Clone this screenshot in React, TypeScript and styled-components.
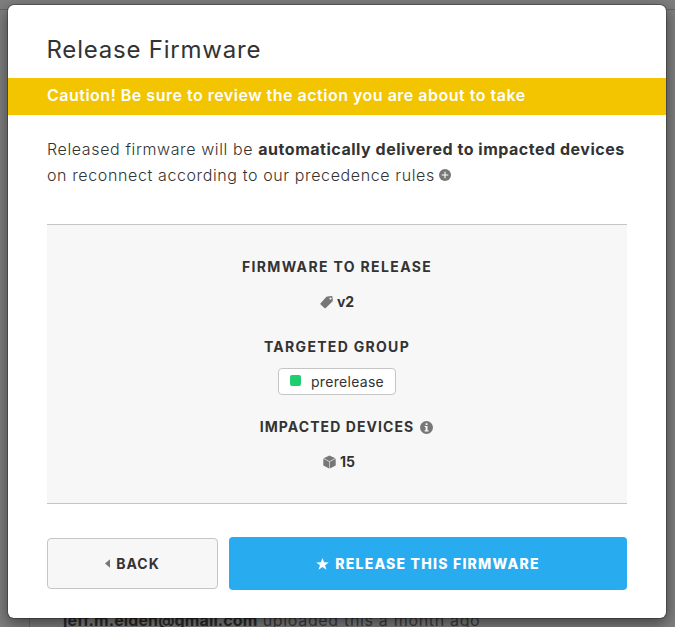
import React from 'react';
import styled, { createGlobalStyle } from 'styled-components';

const GlobalStyle = createGlobalStyle`
  *, *::before, *::after { box-sizing: border-box; }
  html, body { margin: 0; height: 100%; overflow: hidden; background: #7e7e7e; }
  body { font-family: Inter, 'Liberation Sans', sans-serif; color: #333; -webkit-font-smoothing: antialiased; }
  h1, h2, p { margin: 0; }
`;

const Screen = styled.div`
  position: relative;
  width: 675px;
  height: 627px;
  overflow: hidden;
  display: flex;
  padding: 5px 9px 9px 8px;
`;

/* The dimmed page that sits behind the dialog */
const Backdrop = styled.div`
  position: absolute;
  inset: 0;
  display: flex;
  flex-direction: column;
  background: #7e7e7e;
`;

const BackdropBar = styled.div`
  height: 10px;
  flex: none;
  border-bottom: 1px solid #656565;
`;

const BackdropFeed = styled.div`
  flex: 1;
  display: flex;
  align-items: flex-end;
  margin-left: 29px;
  padding-left: 33px;
  border-left: 1px solid #666;
`;

const FeedLine = styled.p`
  height: 19px;
  font-size: 16px;
  line-height: 24px;
  letter-spacing: 0.67px;
  white-space: nowrap;
  color: #3b3b3b;
  b { font-weight: 700; color: #2a2a2a; letter-spacing: 0.12px; }
`;

const Dialog = styled.section`
  position: relative;
  flex: 1;
  display: flex;
  flex-direction: column;
  border-radius: 6px;
  background: #fff;
  box-shadow: 0 0 0 1px rgba(0, 0, 0, 0.26), 0 5px 15px rgba(0, 0, 0, 0.5);
`;

const Title = styled.h1`
  height: 73px;
  padding: 29px 38.5px 0;
  font-size: 24px;
  line-height: 32px;
  font-weight: 400;
  letter-spacing: 0.78px;
`;

const Caution = styled.div`
  height: 37px;
  padding: 0 39px;
  background: #f3c500;
  color: #fff;
  font-size: 16px;
  line-height: 35px;
  font-weight: 600;
  letter-spacing: 0.5px;
  white-space: nowrap;
`;

const Body = styled.div`
  padding: 21px 39px 0;
  display: flex;
  flex-direction: column;
`;

const Line = styled.p`
  display: flex;
  align-items: center;
  height: 26px;
  font-size: 16px;
  line-height: 26px;
  font-weight: 300;
  letter-spacing: 0.62px;
  white-space: pre;
  b { font-weight: 700; letter-spacing: 0.52px; }
  svg { margin-left: 4px; }
`;

const Summary = styled.div`
  height: 280px;
  margin-top: 36px;
  padding-top: 32px;
  display: flex;
  flex-direction: column;
  align-items: center;
  border-top: 1px solid #c5c5c5;
  border-bottom: 1px solid #c5c5c5;
  background: #f7f7f7;
`;

const Item = styled.div`
  height: 80px;
  display: flex;
  flex-direction: column;
  align-items: center;
`;

const Label = styled.h2<{ $spacing: number; $indent?: number }>`
  display: flex;
  align-items: center;
  gap: 6px;
  height: 20px;
  padding-left: ${(p) => p.$indent ?? 0}px;
  font-size: 14px;
  line-height: 20px;
  font-weight: 700;
  letter-spacing: ${(p) => p.$spacing}px;
  white-space: nowrap;
`;

const Value = styled.div<{ $indent?: number }>`
  display: flex;
  align-items: center;
  gap: 4px;
  height: 20px;
  margin-top: 15px;
  padding-left: ${(p) => p.$indent ?? 0}px;
  font-size: 14px;
  line-height: 20px;
  font-weight: 700;
`;

const GroupTag = styled.div`
  display: flex;
  align-items: center;
  width: 118px;
  height: 27px;
  margin-top: 11px;
  padding: 0 0 0 11px;
  border: 1px solid #c5c5c5;
  border-radius: 4px;
  background: #fff;
  font-size: 14px;
  letter-spacing: 0.3px;
`;

const Swatch = styled.span`
  width: 11px;
  height: 11px;
  margin: -3px 10px 0 0;
  border-radius: 2px;
  background: #1fce6d;
`;

const Actions = styled.div`
  display: flex;
  align-items: center;
  gap: 11px;
  height: 53px;
  margin-top: 33px;
`;

const Button = styled.button<{ $primary?: boolean }>`
  display: flex;
  align-items: center;
  justify-content: center;
  flex: ${(p) => (p.$primary ? '1' : '0 0 171px')};
  height: ${(p) => (p.$primary ? 53 : 51)}px;
  gap: 6px;
  padding: 0;
  border: ${(p) => (p.$primary ? '0' : '1px solid #c5c5c5')};
  border-radius: 4px;
  background: ${(p) => (p.$primary ? '#29abf0' : '#f7f7f7')};
  color: ${(p) => (p.$primary ? '#fff' : '#333')};
  font: ${(p) => (p.$primary ? 800 : 700)} 14px/20px Inter, 'Liberation Sans', sans-serif;
  letter-spacing: ${(p) => (p.$primary ? 1.22 : 1)}px;
`;

const PlusIcon = () => (
  <svg width="12" height="12" viewBox="0 0 12 12">
    <circle cx="6" cy="6" r="6" fill="#777" />
    <path d="M6 2.7v6.6M2.7 6h6.6" stroke="#fff" strokeWidth="1.1" />
  </svg>
);

const InfoIcon = () => (
  <svg width="13" height="13" viewBox="0 0 13 13">
    <circle cx="6.5" cy="6.5" r="6.5" fill="#777" />
    <path d="M5.6 2.2h1.9v1.7H5.6zM4.6 5h2.9v4.3h1v1.1H4.6V9.3h1V6.1h-1z" fill="#f7f7f7" />
  </svg>
);

const TagIcon = () => (
  <svg width="13" height="13" viewBox="0 0 13 13">
    <path
      fillRule="evenodd"
      d="M7.4.5 11.2.1Q12.3 0 12.5 1.1L12.8 4.2Q12.9 4.9 12.4 5.4L5.8 12Q5.1 12.6 4.4 12L.6 8.4Q0 7.8.6 7.2L6.2 1.1Q6.7.6 7.4.5ZM10.5 1.4a1.1 1.1 0 1 0 .01 0Z"
      fill="#777"
    />
  </svg>
);

const BoxIcon = () => (
  <svg width="13" height="14" viewBox="0 0 13 14">
    <path d="M6.5.4 12.4 3.2 6.5 6.2.6 3.2ZM.3 3.8l5.9 3v6.7L.3 10.5ZM12.7 3.8l-5.9 3v6.7l5.9-3Z" fill="#777" />
  </svg>
);

const BackArrow = () => (
  <svg width="5" height="9" viewBox="0 0 5 9">
    <path d="M5 .2v8.6L0 4.5Z" fill="#777" />
  </svg>
);

const StarIcon = () => (
  <svg width="13" height="12" viewBox="0 0 13 12">
    <path d="m6.5 0 1.6 4.3 4.7.1-3.8 2.8 1.5 4.6-4-2.8-4 2.8L4 7.2.2 4.4l4.7-.1Z" fill="#fff" />
  </svg>
);

export default function App() {
  return (
    <>
      <GlobalStyle />
      <Screen>
        <Backdrop>
          <BackdropBar />
          <BackdropFeed>
            <FeedLine><b>jeff.m.elden@gmail.com</b> uploaded this a month ago</FeedLine>
          </BackdropFeed>
        </Backdrop>
        <Dialog>
          <Title>Release Firmware</Title>
          <Caution>Caution! Be sure to review the action you are about to take</Caution>
          <Body>
            <Line>Released firmware will be <b>automatically delivered to impacted devices</b></Line>
            <Line>on reconnect according to our precedence rules<PlusIcon /></Line>
            <Summary>
              <Item>
                <Label $spacing={1.36}>FIRMWARE TO RELEASE</Label>
                <Value><TagIcon />v2</Value>
              </Item>
              <Item>
                <Label $spacing={1.3}>TARGETED GROUP</Label>
                <GroupTag><Swatch />prerelease</GroupTag>
              </Item>
              <Item>
                <Label $spacing={1.07} $indent={19}>IMPACTED DEVICES<InfoIcon /></Label>
                <Value $indent={4}><BoxIcon />15</Value>
              </Item>
            </Summary>
            <Actions>
              <Button><BackArrow />BACK</Button>
              <Button $primary><StarIcon />RELEASE THIS FIRMWARE</Button>
            </Actions>
          </Body>
        </Dialog>
      </Screen>
    </>
  );
}
